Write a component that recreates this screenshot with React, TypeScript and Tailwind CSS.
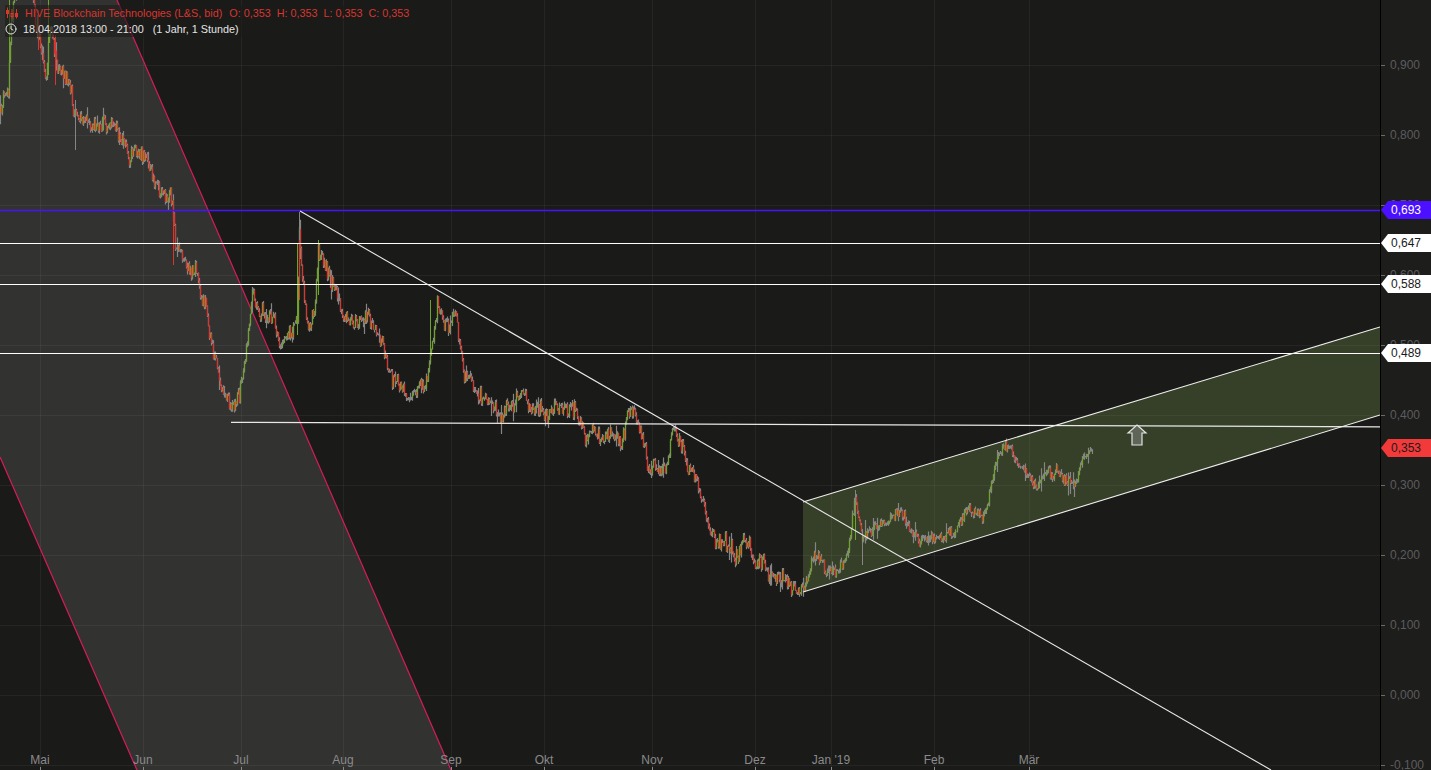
import { Clock } from 'lucide-react';

const RED = '#dc352e';
const GREEN = '#6fa32b';
const WICK = '#858585';

// rough price track read off the chart, as pixel x,y
const TRACK: [number, number][] = [
  [0, 112], [4, 100], [8, 88], [10, 40], [13, 5], [20, -20], [30, -10], [37, 25], [41, 50], [46, 70], [49, 30], [53, 40], [56, 60],
  [60, 72], [66, 85], [70, 95], [75, 120], [85, 125], [95, 133], [105, 124], [120, 135], [130, 155], [145, 160], [155, 185],
  [165, 195], [172, 205], [175, 250], [185, 270], [195, 275], [205, 310], [212, 345], [220, 385], [232, 412], [240, 385],
  [248, 340], [252, 290], [258, 315], [270, 312], [280, 345], [290, 338], [297, 320], [299, 240], [303, 290], [308, 325],
  [315, 300], [318, 250], [325, 265], [335, 295], [345, 325], [360, 322], [375, 328], [385, 355], [395, 380], [405, 392],
  [425, 385], [432, 340], [437, 300], [445, 320], [455, 315], [460, 345], [465, 375], [480, 395], [490, 410], [510, 408],
  [520, 385], [530, 410], [550, 412], [575, 412], [585, 430], [610, 433], [620, 440], [628, 410], [640, 430], [650, 475],
  [665, 465], [672, 435], [680, 450], [695, 480], [705, 510], [715, 545], [722, 540], [735, 560], [745, 540], [755, 560],
  [775, 572], [790, 580], [803, 588], [815, 550], [825, 565], [835, 572], [848, 550], [855, 500], [862, 535], [875, 525],
  [890, 520], [905, 522], [920, 540], [940, 535], [955, 540], [965, 515], [985, 515], [995, 470], [1005, 450], [1012, 455],
  [1025, 470], [1035, 490], [1045, 478], [1060, 475], [1075, 487], [1082, 460], [1092, 450],
];

function midAt(x: number) {
  for (let i = 1; i < TRACK.length; i++) {
    const [x0, y0] = TRACK[i - 1];
    const [x1, y1] = TRACK[i];
    if (x <= x1) return y0 + ((y1 - y0) * (x - x0)) / (x1 - x0);
  }
  return 450;
}

function buildCandles() {
  let seed = 41;
  const rnd = () => {
    seed = (seed * 16807) % 2147483647;
    return seed / 2147483647;
  };
  let wick = '';
  let up = '';
  let down = '';
  let drift = 0;
  let open = midAt(0);
  for (let x = 0; x <= 1092; x++) {
    // slow wander on top of the track, calmer in the last months
    const amp = x > 800 ? 0.7 : 1;
    drift = drift * 0.8 + (rnd() - 0.5) * 9 * amp;
    const close = midAt(x) + drift + (rnd() - 0.5) * 14 * amp;
    const top = Math.min(open, close);
    const bottom = Math.max(open, close);
    const long = rnd() > 0.94 ? 10 : 0;
    wick += `M${x}.5 ${(top - rnd() * 3 - long * rnd()).toFixed(1)}V${(bottom + rnd() * 3 + long * rnd()).toFixed(1)}`;
    const body = `M${x}.5 ${top.toFixed(1)}V${Math.max(bottom, top + 1).toFixed(1)}`;
    // small bars stay gray, only the bigger moves get a colour
    if (Math.abs(close - open) < 2.5) continue;
    if (close < open) up += body;
    else down += body;
    open = close;
  }
  return { wick, up, down };
}

const candles = buildCandles();

const MONTHS: [string, number][] = [
  ['Mai', 40], ['Jun', 143], ['Jul', 241], ['Aug', 343], ['Sep', 451], ['Okt', 544],
  ['Nov', 652], ['Dez', 755], ["Jan '19", 831], ['Feb', 934], ['Mär', 1029],
];

const PRICES: [string, number][] = [
  ['0,900', 65], ['0,800', 135], ['0,700', 205], ['0,600', 275], ['0,500', 345], ['0,400', 415],
  ['0,300', 485], ['0,200', 555], ['0,100', 625], ['0,000', 695], ['-0,100', 765],
];

function PriceTag({ value, y, className }: { value: string; y: number; className: string }) {
  return (
    <div
      className={`absolute left-0 flex h-[18px] w-[51px] items-center pl-[10px] text-xs [clip-path:polygon(0_50%,7px_0,100%_0,100%_100%,7px_100%)] ${className}`}
      style={{ top: y - 9 }}
    >
      {value}
    </div>
  );
}

export default function App() {
  return (
    <div className="flex h-[770px] w-[1431px] overflow-hidden bg-[#1a1a19] font-['Liberation_Sans',Arial,sans-serif]">
      <div className="relative w-[1380px] shrink-0 overflow-hidden">
        <svg className="absolute inset-0" width={1380} height={770} viewBox="0 0 1380 770" fill="none">
          {/* regression channels */}
          <polygon points="0,0 117,0 451,770 137,770 0,457" fill="#323231" />
          <polygon points="803,502 1380,327 1380,415 803,592" fill="#363f28" />

          {/* grid */}
          {PRICES.map(([label, y]) => (
            <line key={label} x1={0} x2={1380} y1={y + 0.5} y2={y + 0.5} stroke="#ffffff" strokeOpacity={0.05} />
          ))}
          {MONTHS.map(([label, x]) => (
            <line key={label} x1={x + 0.5} x2={x + 0.5} y1={0} y2={770} stroke="#ffffff" strokeOpacity={0.05} />
          ))}

          <path d="M117 0L451 770" stroke="#d81b5c" strokeWidth={1.2} />
          <path d="M0 457L137 770" stroke="#d81b5c" strokeWidth={1.2} />

          {/* candles */}
          <path d={candles.wick} stroke={WICK} strokeWidth={1.2} />
          <path d={candles.up} stroke={GREEN} strokeWidth={1.2} />
          <path d={candles.down} stroke={RED} strokeWidth={1.2} />
          <path d="M9.500 95V0M48.500 75V0M297.500 335V243M318.500 295V240M430.500 360V300M855.500 540V495" stroke={GREEN} strokeWidth={1} />
          <path d="M55.500 85V35M38.500 50V10M299.500 300V227M173.500 200V265" stroke={RED} strokeWidth={1} />
          <path d="M75.500 150V100M862.500 565V530M299.500 240V212M855.500 490V515" stroke={WICK} strokeWidth={1} />

          {/* horizontal levels */}
          <line x1={0} x2={1380} y1={243.5} y2={243.5} stroke="#ffffff" strokeWidth={1} />
          <line x1={0} x2={1380} y1={284.5} y2={284.5} stroke="#ffffff" strokeWidth={1} />
          <line x1={0} x2={1380} y1={353.5} y2={353.5} stroke="#ffffff" strokeWidth={1} />
          <line x1={0} x2={1380} y1={210.5} y2={210.5} stroke="#4a10ff" strokeWidth={1.4} />

          {/* trend lines */}
          <path d="M231 422.300L1380 426.800" stroke="#e8e8e8" strokeWidth={1.2} />
          <path d="M300 211L1271 770" stroke="#e8e8e8" strokeWidth={1.1} />
          <path d="M803 502L1380 327" stroke="#efefef" strokeWidth={1.1} />
          <path d="M803 592L1380 415" stroke="#efefef" strokeWidth={1.1} />

          <polygon
            points="1137,425 1146,433 1142,433 1142,445 1132,445 1132,433 1128,433"
            fill="#5f6658"
            stroke="#e2e2e2"
            strokeWidth={1.2}
          />
        </svg>

        {/* legend */}
        <div className="absolute left-[5px] top-[5px] flex flex-col items-start text-[10.8px] leading-4">
          <div className="flex h-4 items-center gap-[6px] bg-[#1a1a19]/60 pl-[1px] pr-[6px] text-[#d8362f]">
            <svg width={12} height={12} viewBox="0 0 12 12" fill="none" stroke="currentColor" className="mr-[1px] shrink-0">
              <path d="M1.500 0.500V11M6 2V11.500M10.500 2V11.500" />
              <rect x={0.5} y={3.5} width={2} height={3} />
              <rect x={5} y={6.5} width={2} height={3} />
              <rect x={9.500} y={6.5} width={2} height={3} />
            </svg>
            <span className="mr-[1px]">HIVE Blockchain Technologies (L&amp;S, bid)</span>
            <span>O: 0,353</span>
            <span>H: 0,353</span>
            <span>L: 0,353</span>
            <span>C: 0,353</span>
          </div>
          <div className="flex h-4 items-center gap-[6px] bg-[#1a1a19]/60 pr-[6px] text-[#e4e4e4]">
            <Clock size={12} strokeWidth={2} className="shrink-0" />
            <span>18.04.2018 13:00 - 21:00</span>
            <span className="ml-[3px]">(1 Jahr, 1 Stunde)</span>
          </div>
        </div>

        {/* time axis */}
        {MONTHS.map(([label, x]) => (
          <span
            key={label}
            className="absolute top-[753px] -translate-x-1/2 whitespace-nowrap text-xs leading-[14px] text-[#8a8a8a]"
            style={{ left: x }}
          >
            {label}
          </span>
        ))}
        {MONTHS.map(([label, x]) => (
          <div key={label} className="absolute top-[767px] h-[3px] w-px bg-[#8a8a8a]" style={{ left: x }} />
        ))}
      </div>

      {/* price axis */}
      <div className="relative flex-1 border-l border-black bg-[#1d1d1c] text-xs text-[#5c5c5c]">
        {PRICES.map(([label, y]) => (
          <div key={label} className="absolute left-0 flex items-center gap-[5px] whitespace-nowrap leading-[14px]" style={{ top: y - 7 }}>
            <span className="h-px w-[4px] bg-[#6a6a6a]" />
            <span>{label}</span>
          </div>
        ))}
        <PriceTag value="0,693" y={210} className="bg-[#4a10ff] text-white" />
        <PriceTag value="0,647" y={243} className="bg-white text-[#1a1a1a]" />
        <PriceTag value="0,588" y={284} className="bg-white text-[#1a1a1a]" />
        <PriceTag value="0,489" y={353} className="bg-white text-[#1a1a1a]" />
        <PriceTag value="0,353" y={448} className="bg-[#f23a3a] text-[#1a1a1a]" />
      </div>
    </div>
  );
}
